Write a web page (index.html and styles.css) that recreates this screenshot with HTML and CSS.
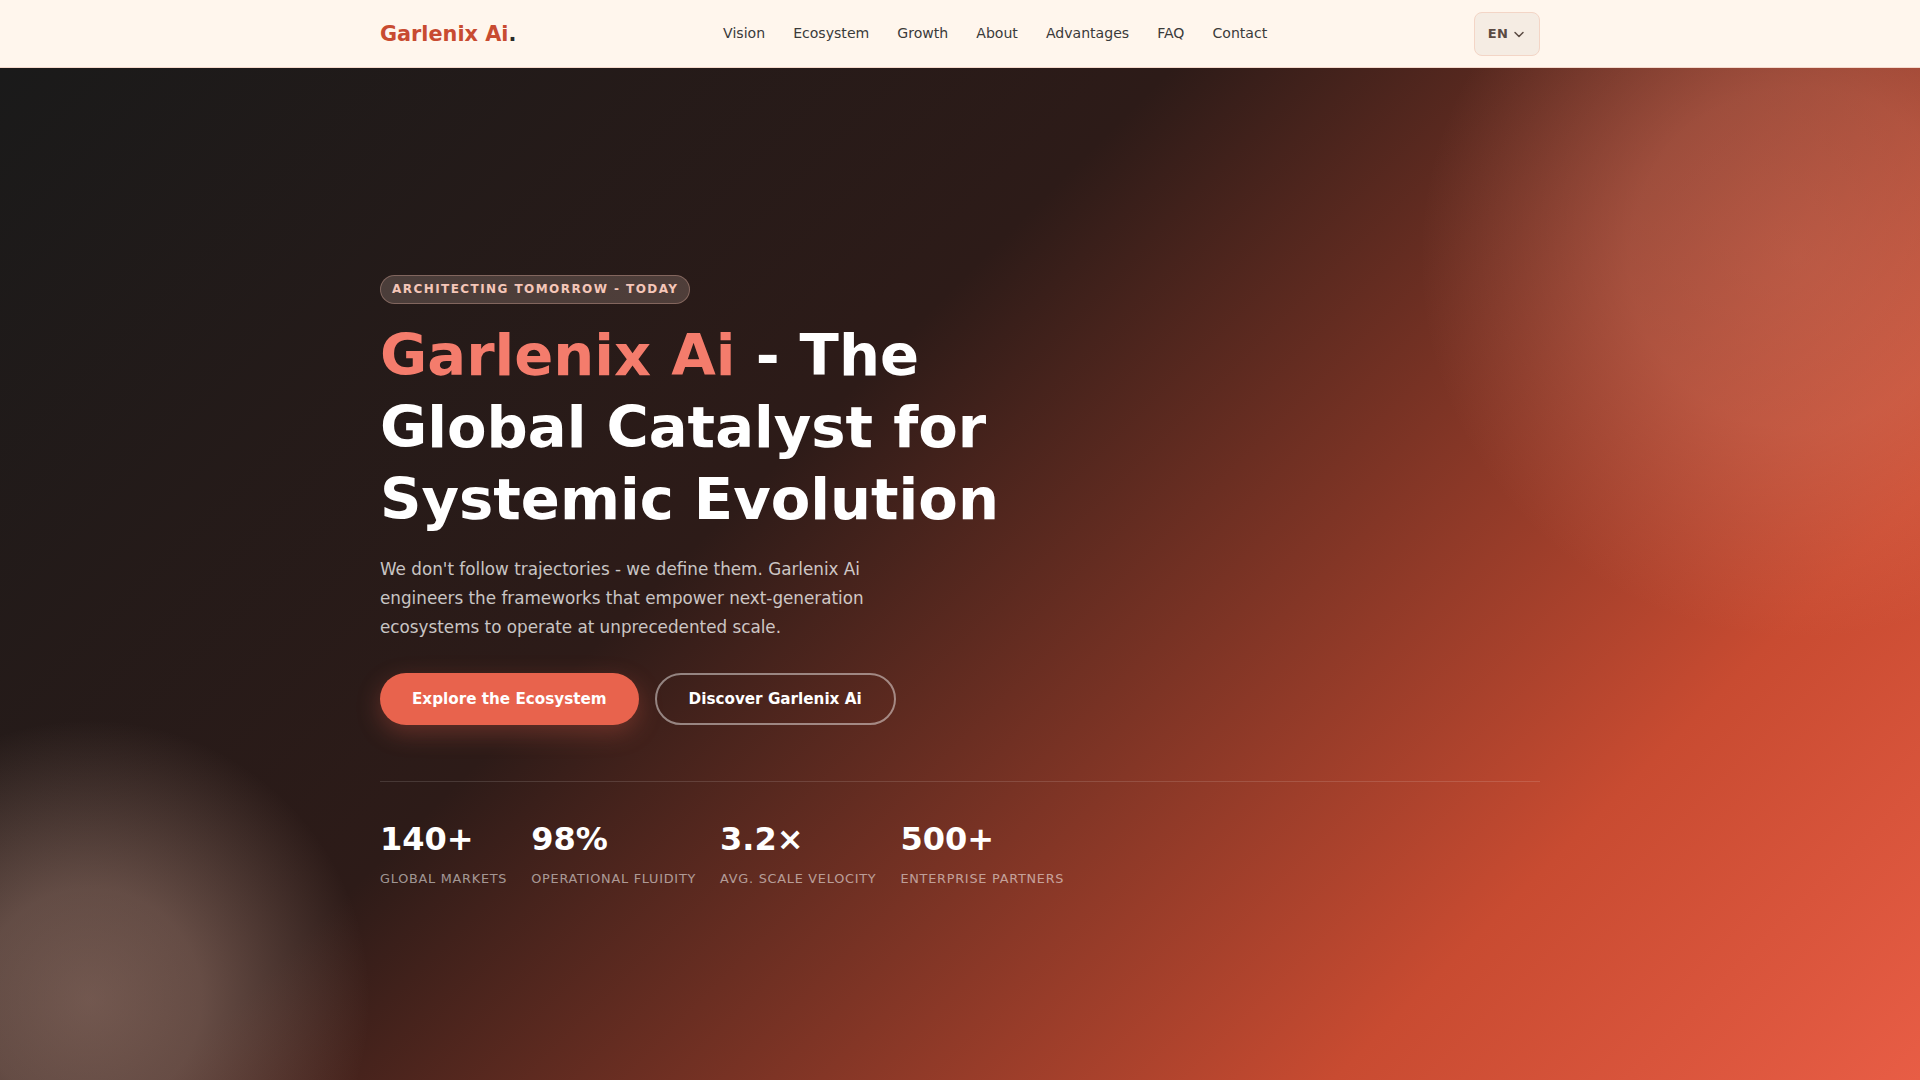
FILE: index.html
```html
<!DOCTYPE html>
<html lang="en">
<head>
    <meta charset="UTF-8">
    <meta name="viewport" content="width=device-width, initial-scale=1.0">
    <title>Garlenix Ai</title>
    <link rel="stylesheet" href="styles.css">
</head>
<body>
    <header class="site-header">
        <div class="container header-row">
            <a class="logo" href="#">Garlenix Ai<span class="logo-dot">.</span></a>
            <nav class="main-nav">
                <a href="#">Vision</a>
                <a href="#">Ecosystem</a>
                <a href="#">Growth</a>
                <a href="#">About</a>
                <a href="#">Advantages</a>
                <a href="#">FAQ</a>
                <a href="#">Contact</a>
            </nav>
            <button class="lang-btn">EN
                <svg width="14" height="14" viewBox="0 0 14 14" fill="none" stroke="currentColor" stroke-width="1.5" stroke-linecap="round" stroke-linejoin="round"><path d="M3 5.5 7 9.5l4-4"/></svg>
            </button>
        </div>
    </header>

    <section class="hero">
        <div class="blob blob-right"></div>
        <div class="blob blob-left"></div>
        <div class="container hero-inner">
            <span class="badge">ARCHITECTING TOMORROW - TODAY</span>
            <h1><span class="accent">Garlenix Ai</span> - The Global Catalyst for Systemic Evolution</h1>
            <p class="lead">We don't follow trajectories - we define them. Garlenix Ai engineers the frameworks that empower next-generation ecosystems to operate at unprecedented scale.</p>
            <div class="actions">
                <a class="btn btn-primary" href="#">Explore the Ecosystem</a>
                <a class="btn btn-outline" href="#">Discover Garlenix Ai</a>
            </div>
            <div class="stats">
                <div class="stat"><strong>140+</strong><span>Global Markets</span></div>
                <div class="stat"><strong>98%</strong><span>Operational Fluidity</span></div>
                <div class="stat"><strong>3.2×</strong><span>Avg. Scale Velocity</span></div>
                <div class="stat"><strong>500+</strong><span>Enterprise Partners</span></div>
            </div>
        </div>
    </section>
</body>
</html>
```

FILE: styles.css
```css
* {
    box-sizing: border-box;
}
body {
    margin: 0;
    height: 1080px;
    overflow: hidden;
    font-family: "DejaVu Sans", sans-serif;
    background: #1a1a1a;
}
a {
    text-decoration: none;
}
.container {
    width: 1160px;
    margin: 0 auto;
}

/* header */
.site-header {
    height: 68px;
    background: #fff6ed;
    border-bottom: 1px solid #f5d9cc;
}
.header-row {
    height: 67px;
    display: flex;
    align-items: center;
    justify-content: space-between;
}
.logo {
    font-size: 20.8px;
    font-weight: 700;
    color: #c84b31;
}
.logo-dot {
    color: #2a2a2a;
}
.main-nav {
    display: flex;
    gap: 28px;
    margin-bottom: 2px;
}
.main-nav a {
    font-size: 14.08px;
    color: #3a3a3a;
}
.lang-btn {
    width: 66px;
    height: 44px;
    display: flex;
    align-items: center;
    justify-content: center;
    gap: 4px;
    padding: 0;
    font-family: inherit;
    font-size: 13px;
    font-weight: 700;
    letter-spacing: 0.4px;
    color: #5a4a42;
    background: #f5ece3;
    border: 1px solid #f3d5c6;
    border-radius: 8px;
}

/* hero */
.hero {
    position: relative;
    height: 1012px;
    overflow: hidden;
    background: linear-gradient(135deg, #1a1a1a 0%, #2d1b18 40%, #c84b31 80%, #e85d45 100%);
}
.blob {
    position: absolute;
    border-radius: 50%;
}
.blob-right {
    top: -190px;
    right: -260px;
    width: 760px;
    height: 760px;
    background: radial-gradient(closest-side, rgba(255, 150, 125, 0.32) 0%, rgba(255, 150, 125, 0.27) 45%, rgba(255, 150, 125, 0) 100%);
}
.blob-left {
    left: -190px;
    bottom: -200px;
    width: 560px;
    height: 560px;
    background: radial-gradient(closest-side, rgba(252, 205, 185, 0.34) 0%, rgba(252, 205, 185, 0.28) 40%, rgba(252, 205, 185, 0) 100%);
}
.hero-inner {
    position: relative;
    padding-top: 207px;
}
.badge {
    display: inline-block;
    height: 29px;
    padding: 0 11px;
    font-size: 12px;
    line-height: 27px;
    font-weight: 700;
    letter-spacing: 1.44px;
    color: #f5c6b8;
    background: rgba(255, 220, 210, 0.18);
    border: 1px solid rgba(255, 200, 180, 0.3);
    border-radius: 15px;
}
h1 {
    width: 680px;
    margin: 16px 0 19px;
    font-size: 57.6px;
    line-height: 72px;
    font-weight: 700;
    color: #fff;
}
.accent {
    color: #f47c6c;
}
.lead {
    width: 520px;
    margin: 0 0 31px;
    font-size: 16.8px;
    line-height: 29px;
    color: rgba(255, 255, 255, 0.75);
}
.actions {
    display: flex;
    gap: 16px;
}
.btn {
    height: 52px;
    display: flex;
    align-items: center;
    padding: 0 32px;
    font-size: 15.2px;
    font-weight: 700;
    color: #fff;
    border-radius: 26px;
}
.btn-primary {
    background: #e8634d;
    box-shadow: 0 8px 24px rgba(232, 96, 76, 0.3);
}
.btn-outline {
    border: 2px solid rgba(255, 255, 255, 0.45);
}
.stats {
    display: flex;
    gap: 24px;
    margin-top: 56px;
    padding-top: 38px;
    border-top: 1px solid rgba(255, 255, 255, 0.13);
}
.stat strong {
    display: block;
    font-size: 32px;
    line-height: 38px;
    color: #fff;
}
.stat span {
    display: block;
    margin-top: 13px;
    font-size: 12.8px;
    letter-spacing: 0.768px;
    text-transform: uppercase;
    color: rgba(255, 255, 255, 0.55);
}
```
